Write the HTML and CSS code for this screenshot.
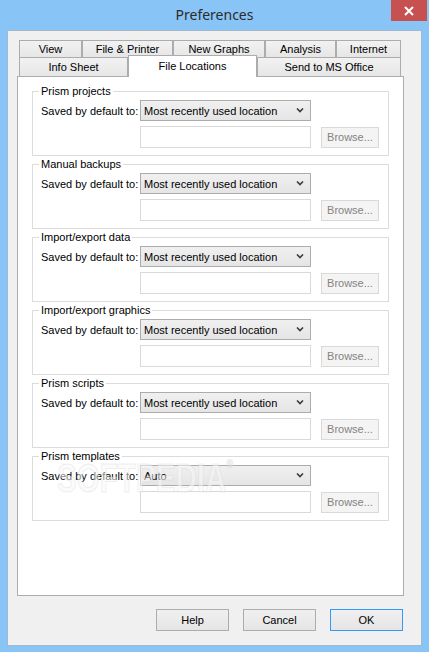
FILE: index.html
```html
<!DOCTYPE html>
<html lang="en">
<head>
  <meta charset="UTF-8">
  <meta name="viewport" content="width=device-width, initial-scale=1.0">
  <title>Preferences</title>
  <link rel="stylesheet" href="styles.css">
</head>
<body>
  <div class="window">
    <div class="titlebar">
      <span></span>
      <span class="title">Preferences</span>
      <button class="close" type="button">
        <svg width="10" height="10" viewBox="0 0 10 10">
          <path d="M1 1 L9 9 M9 1 L1 9" stroke="#fff" stroke-width="2" fill="none"/>
        </svg>
      </button>
    </div>

    <div class="client">
      <div class="tabs">
        <div class="tab-row top">
          <div class="tab" style="width:63px">View</div>
          <div class="tab" style="width:91px">File &amp; Printer</div>
          <div class="tab" style="width:92px">New Graphs</div>
          <div class="tab" style="width:71px">Analysis</div>
          <div class="tab" style="width:65px">Internet</div>
        </div>
        <div class="tab-row bottom">
          <div class="tab" style="width:109px">Info Sheet</div>
          <div class="tab active" style="width:129px">File Locations</div>
          <div class="tab" style="width:144px">Send to MS Office</div>
        </div>
      </div>

      <div class="panel">
        <fieldset class="group">
          <legend>Prism projects</legend>
          <div class="row">
            <label>Saved by default to:</label>
            <div class="combo"><span>Most recently used location</span><svg width="8" height="5" viewBox="0 0 8 5"><path d="M1 0.5 L4 3.5 L7 0.5" stroke="#3c3c3c" stroke-width="1.6" fill="none"/></svg></div>
          </div>
          <div class="row path-row">
            <div class="path"></div>
            <button class="browse" type="button" disabled>Browse...</button>
          </div>
        </fieldset>

        <fieldset class="group">
          <legend>Manual backups</legend>
          <div class="row">
            <label>Saved by default to:</label>
            <div class="combo"><span>Most recently used location</span><svg width="8" height="5" viewBox="0 0 8 5"><path d="M1 0.5 L4 3.5 L7 0.5" stroke="#3c3c3c" stroke-width="1.6" fill="none"/></svg></div>
          </div>
          <div class="row path-row">
            <div class="path"></div>
            <button class="browse" type="button" disabled>Browse...</button>
          </div>
        </fieldset>

        <fieldset class="group">
          <legend>Import/export data</legend>
          <div class="row">
            <label>Saved by default to:</label>
            <div class="combo"><span>Most recently used location</span><svg width="8" height="5" viewBox="0 0 8 5"><path d="M1 0.5 L4 3.5 L7 0.5" stroke="#3c3c3c" stroke-width="1.6" fill="none"/></svg></div>
          </div>
          <div class="row path-row">
            <div class="path"></div>
            <button class="browse" type="button" disabled>Browse...</button>
          </div>
        </fieldset>

        <fieldset class="group">
          <legend>Import/export graphics</legend>
          <div class="row">
            <label>Saved by default to:</label>
            <div class="combo"><span>Most recently used location</span><svg width="8" height="5" viewBox="0 0 8 5"><path d="M1 0.5 L4 3.5 L7 0.5" stroke="#3c3c3c" stroke-width="1.6" fill="none"/></svg></div>
          </div>
          <div class="row path-row">
            <div class="path"></div>
            <button class="browse" type="button" disabled>Browse...</button>
          </div>
        </fieldset>

        <fieldset class="group">
          <legend>Prism scripts</legend>
          <div class="row">
            <label>Saved by default to:</label>
            <div class="combo"><span>Most recently used location</span><svg width="8" height="5" viewBox="0 0 8 5"><path d="M1 0.5 L4 3.5 L7 0.5" stroke="#3c3c3c" stroke-width="1.6" fill="none"/></svg></div>
          </div>
          <div class="row path-row">
            <div class="path"></div>
            <button class="browse" type="button" disabled>Browse...</button>
          </div>
        </fieldset>

        <fieldset class="group">
          <legend>Prism templates</legend>
          <div class="row">
            <label>Saved by default to:</label>
            <div class="combo"><span>Auto</span><svg width="8" height="5" viewBox="0 0 8 5"><path d="M1 0.5 L4 3.5 L7 0.5" stroke="#3c3c3c" stroke-width="1.6" fill="none"/></svg></div>
          </div>
          <div class="row path-row">
            <div class="path"></div>
            <button class="browse" type="button" disabled>Browse...</button>
          </div>
        </fieldset>

        <span class="watermark">SOFTPEDIA<sup>&reg;</sup></span>
      </div>

      <div class="actions">
        <button class="btn" type="button">Help</button>
        <button class="btn" type="button">Cancel</button>
        <button class="btn default" type="button">OK</button>
      </div>
    </div>
  </div>
</body>
</html>
```

FILE: styles.css
```css
body {
  margin: 0;
  padding: 0;
  font-family: 'Liberation Sans', Arial, sans-serif;
  font-size: 11px;
  color: #000;
}

.window {
  width: 429px;
  height: 652px;
  background-color: #89c4f7;
  box-sizing: border-box;
}

.titlebar {
  height: 30px;
  display: grid;
  grid-template-columns: 1fr auto 1fr;
  align-items: start;
}

.title {
  font-family: 'Noto Sans', 'Open Sans', sans-serif;
  font-size: 14px;
  color: #2b2b2b;
  line-height: 30px;
}

.close {
  justify-self: end;
  margin-right: 2px;
  width: 36px;
  height: 21px;
  border: none;
  padding: 0;
  background-color: #c75050;
  display: flex;
  align-items: center;
  justify-content: center;
}

.client {
  margin: 0 7px;
  height: 616px;
  box-sizing: border-box;
  border: 1px solid #a3b8cc;
  background-color: #f0f0f0;
  padding: 9px 18px 0 9px;
}

/* tabs */
.tabs {
  margin: 0 2px;
  width: 382px;
}

.tab-row {
  display: flex;
}

.tab-row.top {
  height: 17px;
}

.tab-row.bottom {
  height: 19px;
}

.tab {
  box-sizing: border-box;
  border: 1px solid #acacac;
  border-bottom: none;
  background: linear-gradient(#f2f2f2, #e6e6e6);
  text-align: center;
  white-space: nowrap;
}

.top .tab {
  line-height: 16px;
}

.bottom .tab {
  line-height: 18px;
}

.tab.active {
  position: relative;
  z-index: 1;
  height: 22px;
  margin-top: -2px;
  background: #ffffff;
  line-height: 20px;
}

/* panel */
.panel {
  position: relative;
  width: 387px;
  height: 520px;
  box-sizing: border-box;
  border: 1px solid #adadad;
  background-color: #ffffff;
  padding: 8px 14px 0;
}

.group {
  margin: 0 0 2px;
  padding: 2px 0 7px 8px;
  border: 1px solid #dcdcdc;
  min-width: 0;
}

.group legend {
  margin-left: -2px;
  padding: 0 2px;
  line-height: 13px;
}

.row {
  display: flex;
  align-items: center;
}

.row label {
  width: 99px;
  white-space: nowrap;
}

.combo {
  width: 171px;
  height: 21px;
  box-sizing: border-box;
  border: 1px solid #acacac;
  background: linear-gradient(#f0f0f0, #e5e5e5);
  display: flex;
  align-items: center;
  justify-content: space-between;
  padding: 0 6px 0 3px;
}

.path-row {
  margin-top: 5px;
  padding-left: 99px;
  gap: 10px;
}

.path {
  width: 171px;
  height: 22px;
  box-sizing: border-box;
  border: 1px solid #d9d9d9;
  background-color: #ffffff;
}

.browse {
  width: 58px;
  height: 21px;
  box-sizing: border-box;
  border: 1px solid #d9d9d9;
  background-color: #f4f4f4;
  color: #838383;
  font-family: inherit;
  font-size: 11px;
  padding: 0;
}

.watermark {
  position: absolute;
  left: 39px;
  top: 381px;
  font-size: 40px;
  line-height: 40px;
  font-weight: bold;
  white-space: nowrap;
  color: rgba(248, 248, 248, 0.55);
  -webkit-text-stroke: 1px rgba(200, 200, 200, 0.3);
  transform: scaleX(0.74);
  transform-origin: left top;
  pointer-events: none;
}

.watermark sup {
  font-size: 12px;
  vertical-align: top;
  line-height: 12px;
}

/* dialog buttons */
.actions {
  display: flex;
  justify-content: flex-end;
  gap: 14px;
  margin-top: 13px;
}

.btn {
  width: 73px;
  height: 22px;
  box-sizing: border-box;
  border: 1px solid #acacac;
  background: linear-gradient(#f0f0f0, #e5e5e5);
  font-family: inherit;
  font-size: 11px;
  color: #000;
  padding: 0;
}

.btn.default {
  border-color: #3399ff;
}
```
